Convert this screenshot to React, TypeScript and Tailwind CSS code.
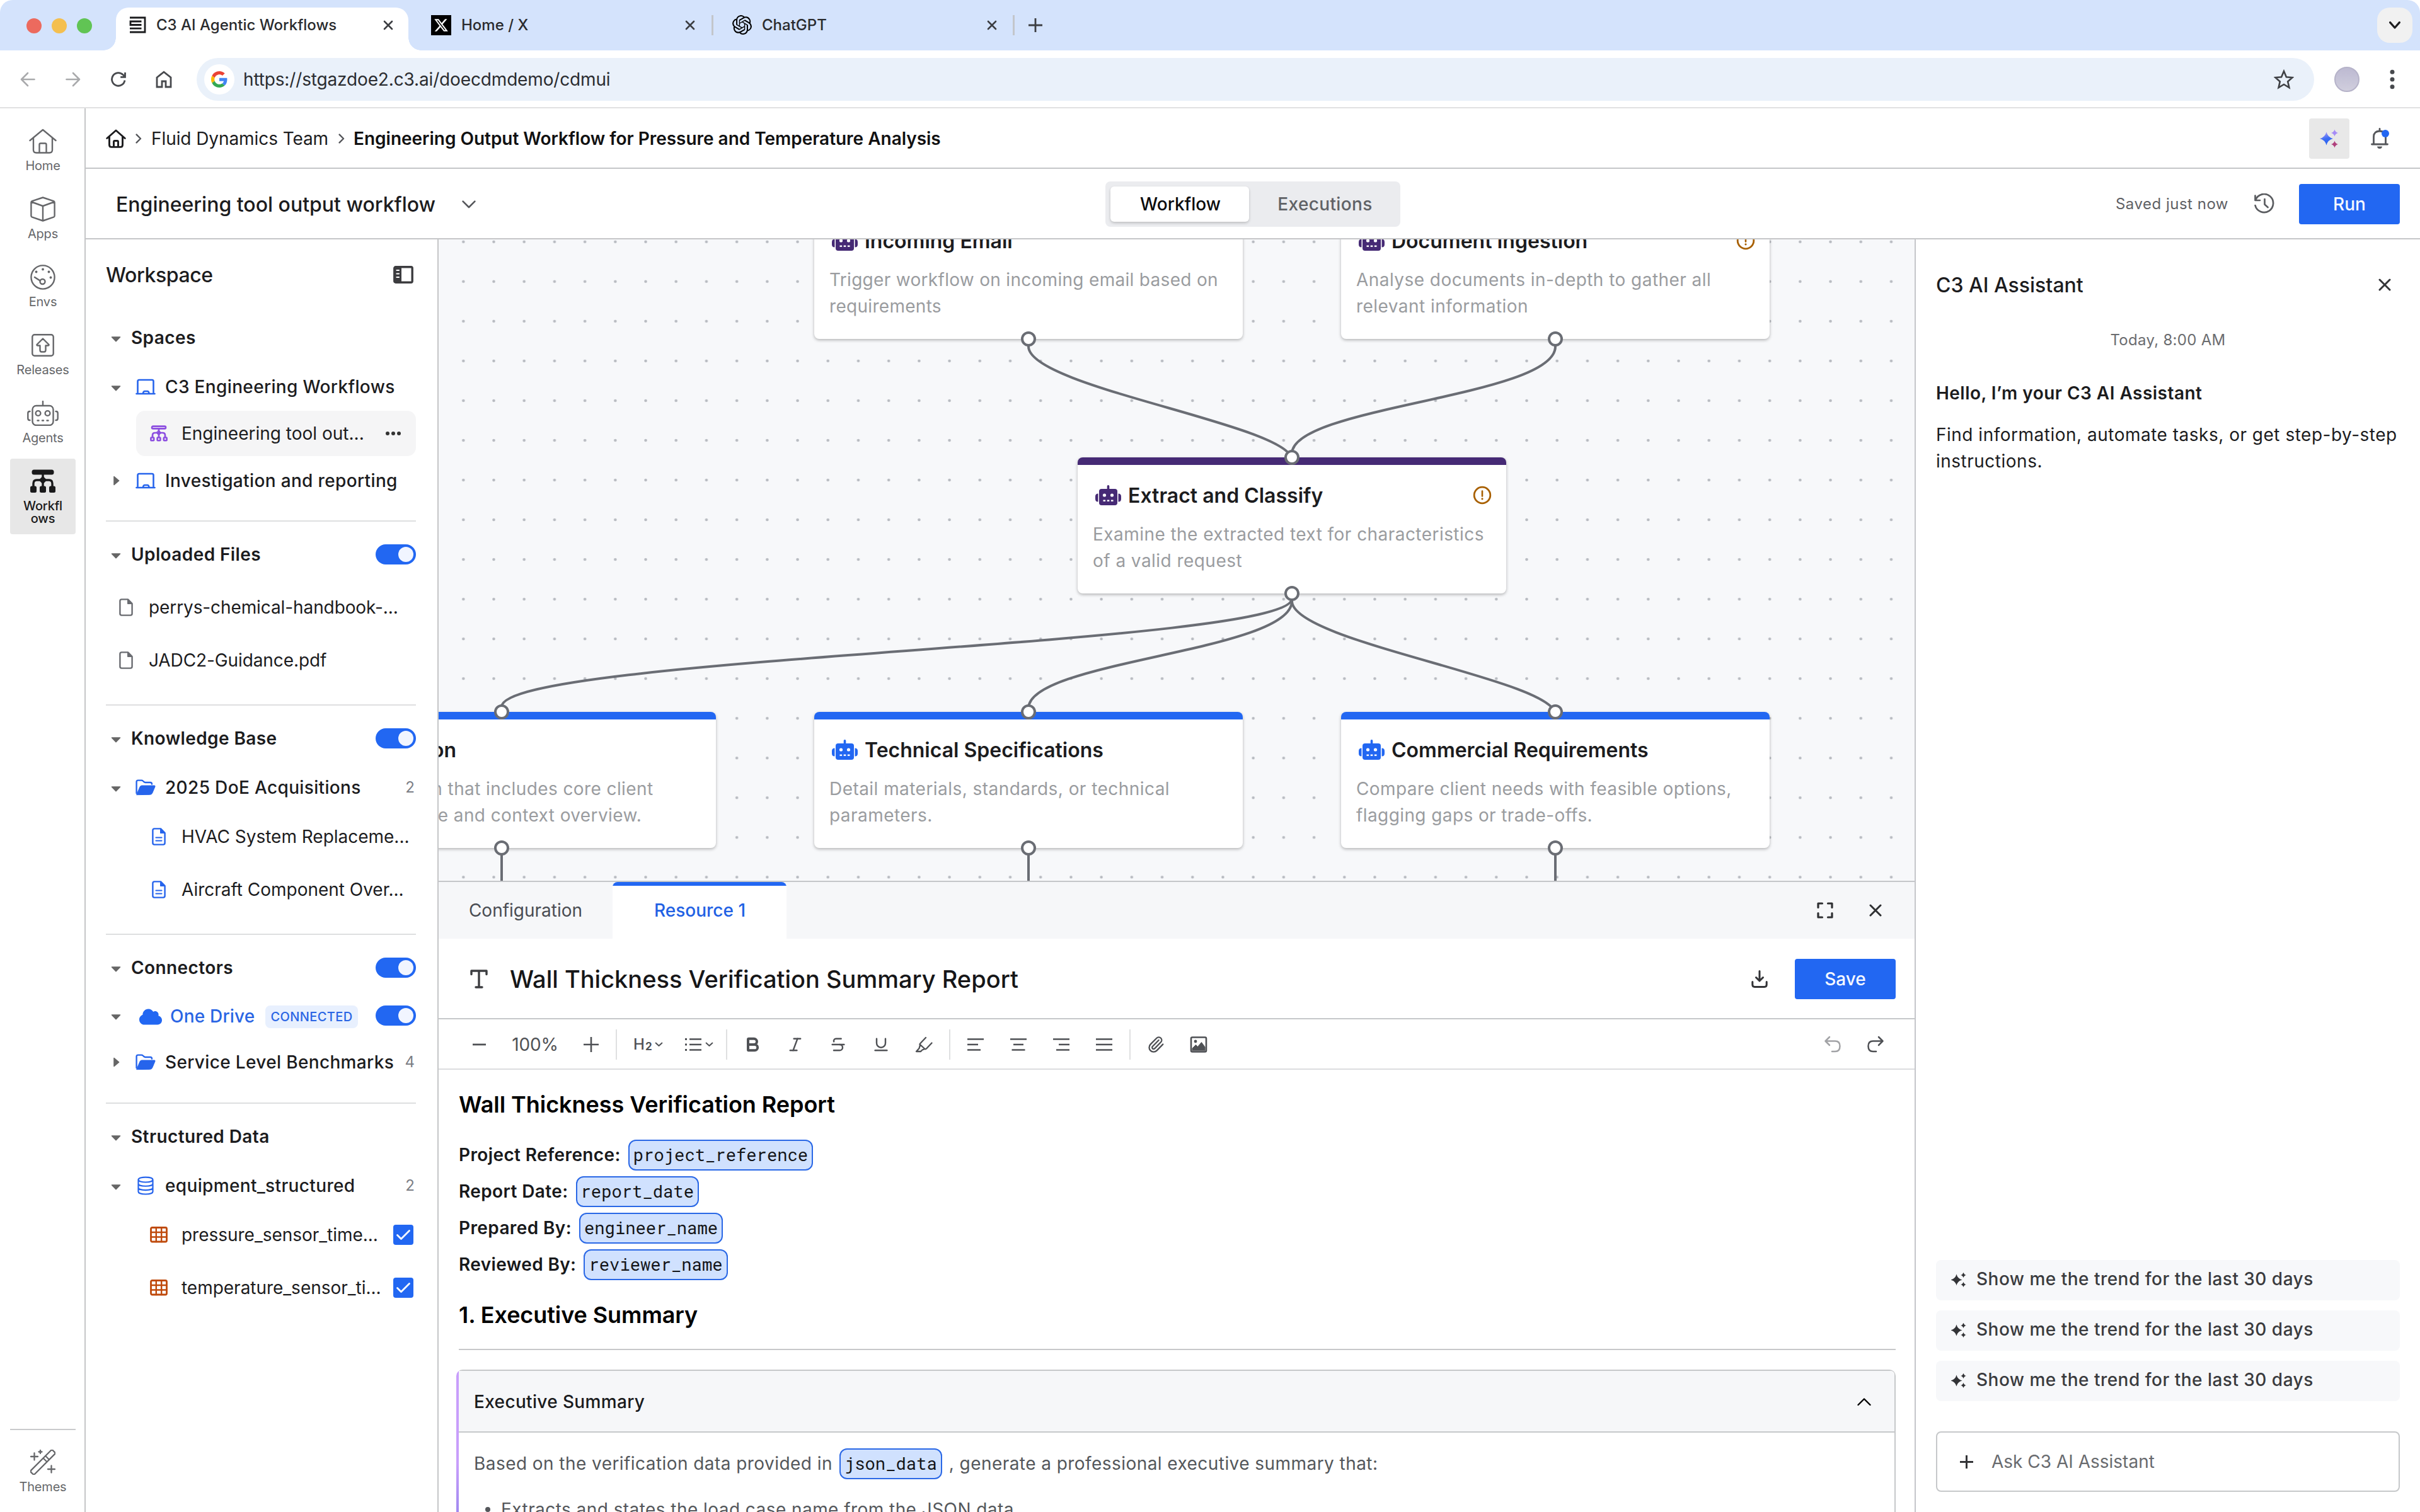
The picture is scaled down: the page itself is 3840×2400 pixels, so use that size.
import type { ReactNode } from "react";
import { FaCloud } from "react-icons/fa";
import { SiOpenai } from "react-icons/si";
import { Bold, Italic, Paperclip, Strikethrough, Underline } from "lucide-react";

/* ---------- icons ---------- */

type IconProps = { className?: string };

function Svg({ w, h, className = "", children }: { w: number; h: number; className?: string; children: ReactNode }) {
  return (
    <svg width={w} height={h} viewBox={`0 0 ${w} ${h}`} fill="none" stroke="currentColor" strokeLinecap="round" strokeLinejoin="round" className={`shrink-0 ${className}`}>
      {children}
    </svg>
  );
}

const star = (cx: number, cy: number, r: number) => {
  const k = r * 0.2;
  return `M${cx} ${cy - r}Q${cx + k} ${cy - k} ${cx + r} ${cy}Q${cx + k} ${cy + k} ${cx} ${cy + r}Q${cx - k} ${cy + k} ${cx - r} ${cy}Q${cx - k} ${cy - k} ${cx} ${cy - r}Z`;
};

const Close = ({ size = 18, sw = 3, className = "" }: { size?: number; sw?: number; className?: string }) => (
  <Svg w={size} h={size} className={className}>
    <path d={`M2 2L${size - 2} ${size - 2}M${size - 2} 2L2 ${size - 2}`} strokeWidth={sw} />
  </Svg>
);

const Plus = ({ size = 24, sw = 3, className = "" }: { size?: number; sw?: number; className?: string }) => (
  <Svg w={size} h={size} className={className}>
    <path d={`M${size / 2} 2V${size - 2}M2 ${size / 2}H${size - 2}`} strokeWidth={sw} strokeLinecap="butt" />
  </Svg>
);

const ChevDown = ({ w = 20, h = 12, sw = 2.6, className = "" }: { w?: number; h?: number; sw?: number; className?: string }) => (
  <Svg w={w} h={h} className={className}>
    <path d={`M1.6 1.6L${w / 2} ${h - 2}L${w - 1.6} 1.6`} strokeWidth={sw} />
  </Svg>
);

const ChevRight = ({ className = "" }: IconProps) => (
  <Svg w={10} h={16} className={className}>
    <path d="M1.6 1.6L8 8L1.6 14.4" strokeWidth={2.4} />
  </Svg>
);

const Caret = ({ open = true }: { open?: boolean }) => (
  <span className="flex w-8 shrink-0 items-center justify-center text-[#666]">
    {open ? (
      <Svg w={16} h={9} className="mt-1">
        <path d="M1.5 1H14.5L8 7.6Z" fill="currentColor" strokeWidth={1.6} />
      </Svg>
    ) : (
      <Svg w={10} h={16} className="ml-[2px]">
        <path d="M1 1.5V14.5L8.6 8Z" fill="currentColor" strokeWidth={1.6} />
      </Svg>
    )}
  </span>
);

const Google = () => (
  <svg width="26" height="26" viewBox="0 0 48 48">
    <path fill="#EA4335" d="M24 9.5c3.54 0 6.71 1.22 9.21 3.6l6.85-6.85C35.9 2.38 30.47 0 24 0 14.62 0 6.51 5.38 2.56 13.22l7.98 6.19C12.43 13.72 17.74 9.5 24 9.5z" />
    <path fill="#4285F4" d="M46.98 24.55c0-1.57-.15-3.09-.38-4.55H24v9.02h12.94c-.58 2.96-2.26 5.48-4.78 7.18l7.73 6c4.51-4.18 7.09-10.36 7.09-17.65z" />
    <path fill="#FBBC05" d="M10.53 28.59c-.48-1.45-.76-2.99-.76-4.59s.27-3.14.76-4.59l-7.98-6.19C.92 16.46 0 20.12 0 24c0 3.88.92 7.54 2.56 10.78l7.97-6.19z" />
    <path fill="#34A853" d="M24 48c6.48 0 11.93-2.13 15.89-5.81l-7.73-6c-2.15 1.45-4.92 2.3-8.16 2.3-6.26 0-11.57-4.22-13.47-9.91l-7.98 6.19C6.51 42.62 14.62 48 24 48z" />
  </svg>
);

const HomeRail = () => (
  <Svg w={44} h={40}>
    <path d="M1.5 19L22 2L42.5 19M7 15V34Q7 38.5 11.5 38.5H32.5Q37 38.5 37 34V15M16.500 38V25.500Q16.500 23.500 18.500 23.500H25.500Q27.500 23.500 27.500 25.500V38" strokeWidth={2.4} />
  </Svg>
);

const CubeIcon = () => (
  <Svg w={40} h={40}>
    <path d="M20 1.500L37 7.200Q38.600 7.800 38.600 9.400V30.500Q38.600 32 37 32.700L20 38.500L3 32.700Q1.400 32 1.400 30.500V9.400Q1.400 7.800 3 7.200ZM2 8.500L20 15L38 8.500M20 15V38" strokeWidth={2.4} />
  </Svg>
);

const GaugeIcon = () => (
  <Svg w={40} h={40}>
    <circle cx="20" cy="20" r="18.600" strokeWidth={2.4} />
    <circle cx="19.500" cy="27" r="4" strokeWidth={2.4} />
    <path d="M7 20L15.500 25.500" strokeWidth={2.6} />
    <g fill="currentColor" stroke="none">
      <circle cx="9.500" cy="11.500" r="1.900" />
      <circle cx="20" cy="7.500" r="1.900" />
      <circle cx="29.500" cy="11.500" r="1.900" />
      <circle cx="32.500" cy="20.500" r="1.900" />
    </g>
  </Svg>
);

const ReleaseIcon = () => (
  <Svg w={36} h={36}>
    <rect x="1.300" y="1.300" width="33.400" height="33.400" rx="3.500" strokeWidth={2.4} />
    <path d="M18 7.500L27.500 17Q28 18.500 26 18.500H22.500V25.500Q22.500 28.500 20 28.500H16Q13.500 28.500 13.500 25.500V18.500H10Q8 18.500 8.500 17Z" strokeWidth={2.4} />
  </Svg>
);

const AgentIcon = () => (
  <Svg w={50} h={40}>
    <rect x="8.500" y="8" width="33" height="31" rx="6" strokeWidth={2.4} />
    <path d="M25 1V7M4.500 17H4Q1.300 17 1.300 20V28Q1.300 31 4 31H4.500M45.500 17H46Q48.700 17 48.700 20V28Q48.700 31 46 31H45.500" strokeWidth={2.4} />
    <circle cx="17.500" cy="20" r="3.900" strokeWidth={2.4} />
    <circle cx="32.500" cy="20" r="3.900" strokeWidth={2.4} />
    <path d="M16.500 31.500H18.500M24 31.500H26M31.500 31.500H33.500" strokeWidth={2.4} />
  </Svg>
);

const WorkflowIcon = () => (
  <Svg w={40} h={40}>
    <g fill="currentColor" stroke="none">
      <rect x="2.500" y="1.500" width="35" height="8" rx="3.500" />
      <rect x="0" y="27.500" width="10" height="10.500" rx="2.500" />
      <rect x="15" y="27.500" width="10" height="10.500" rx="2.500" />
      <rect x="30" y="27.500" width="10" height="10.500" rx="2.500" />
      <path d="M20 11.500L26.500 18L20 24.500L13.500 18Z" />
    </g>
    <path d="M20 9V28M5 28V23.500Q5 18 10.500 18H29.500Q35 18 35 23.500V28" strokeWidth={3.4} />
  </Svg>
);

const WorkflowSmall = ({ className = "" }: IconProps) => (
  <Svg w={28} h={26} className={className}>
    <rect x="3" y="1.600" width="22" height="3.800" rx="1.900" strokeWidth={2.600} />
    <path d="M14 6V19M4 19V16Q4 12 8 12H20Q24 12 24 16V19" strokeWidth={2.700} />
    <path d="M14 8L18 12L14 16L10 12Z" fill="currentColor" strokeWidth={1} />
    <rect x="1.400" y="19.500" width="4.800" height="4.800" rx=".8" strokeWidth={2.600} />
    <rect x="11.600" y="19.500" width="4.800" height="4.800" rx=".8" strokeWidth={2.600} />
    <rect x="21.800" y="19.500" width="4.800" height="4.800" rx=".8" strokeWidth={2.600} />
  </Svg>
);

const WandIcon = () => (
  <Svg w={40} h={40}>
    <g transform="rotate(-45 20 20)">
      <rect x="-4.500" y="15.800" width="49" height="8.400" rx="2.500" strokeWidth={2.300} />
      <path d="M25 16V24M30 16V24" strokeWidth={2.100} />
    </g>
    <path d="M6.500 5.500V16.500M1 11H12M16 1V6M13.500 3.500H18.500M33.500 25.500V36.500M28 31H39" strokeWidth={2.300} />
  </Svg>
);

const LaptopIcon = () => (
  <Svg w={32} h={26}>
    <path d="M3.500 22V4.200Q3.500 2 5.700 2H26.300Q28.500 2 28.500 4.200V22M1.500 24H30.500M12 23.500Q12.500 20 14.500 20H19Q21 20 21.500 23.500" strokeWidth={2.600} />
  </Svg>
);

const FolderIcon = () => (
  <Svg w={32} h={26}>
    <path d="M1.600 22V4Q1.600 1.600 4 1.600H9.500Q10.800 1.600 11.700 2.500L13.500 4.200Q14.300 5 15.500 5H23.500Q26 5 26 7.500" strokeWidth={2.400} />
    <path d="M1.800 24.300L7 12Q7.800 10 10 10H30Q31.500 10 31 11.500L26.700 21.800Q25.700 24.300 23 24.300Z" fill="currentColor" strokeWidth={1} />
  </Svg>
);

const FileIcon = ({ lines = false, className = "" }: IconProps & { lines?: boolean }) => (
  <Svg w={22} h={28} className={className}>
    <path d="M14 1.400H4Q1.400 1.400 1.400 4V24Q1.400 26.600 4 26.600H18Q20.600 26.600 20.600 24V8Z" strokeWidth={2.400} />
    <path d="M13.500 2V8.500H20.500Z" fill="currentColor" strokeWidth={1} />
    {lines && <path d="M6.500 15.500H15.500M6.500 20.500H15.500" strokeWidth={2.200} />}
  </Svg>
);

const DbIcon = () => (
  <Svg w={26} h={30}>
    <path d="M1.500 5.500C1.500 .2 24.500 .2 24.500 5.500C24.500 10.800 1.500 10.800 1.500 5.500V24.500C1.500 29.800 24.500 29.800 24.500 24.500V5.500M1.500 12C1.500 17 24.500 17 24.500 12M1.500 18.300C1.500 23.300 24.500 23.300 24.500 18.300" strokeWidth={2.200} />
  </Svg>
);

const TableIcon = () => (
  <Svg w={28} h={26} className="text-[#bf4a0c]">
    <rect x="1.500" y="1.500" width="25" height="22.500" rx="2" strokeWidth={2.800} />
    <path d="M9.800 2V24M18.200 2V24M2 9H26M2 16.500H26" strokeWidth={2.400} />
  </Svg>
);

const PanelIcon = () => (
  <Svg w={32} h={28} className="text-[#3c3c3f]">
    <rect x="1.800" y="1.800" width="28.400" height="24.400" rx="2" strokeWidth={3.400} />
    <rect x="2" y="2" width="11" height="24" fill="currentColor" stroke="none" />
    <path d="M5.500 7H9M5.500 12.500H9M5.500 18H9" stroke="white" strokeWidth={2.200} />
  </Svg>
);

const RobotSolid = () => (
  <Svg w={41} h={32}>
    <g fill="currentColor" stroke="none">
      <rect x="6" y="6" width="29" height="26" rx="4" />
      <rect x="18.700" y="0" width="3.600" height="8" rx="1.800" />
      <path d="M4.500 13.500V26.500Q0 26.500 0 22V18Q0 13.500 4.500 13.500ZM36.500 13.500V26.500Q41 26.500 41 22V18Q41 13.500 36.500 13.500Z" />
    </g>
    <g fill="white" stroke="none">
      <circle cx="14.500" cy="16" r="2.600" />
      <circle cx="26.500" cy="16" r="2.600" />
      <rect x="12.500" y="23.500" width="3.600" height="2.400" />
      <rect x="18.700" y="23.500" width="3.600" height="2.400" />
      <rect x="24.900" y="23.500" width="3.600" height="2.400" />
    </g>
  </Svg>
);

const WarnIcon = () => (
  <Svg w={30} h={30} className="text-[#a86000]">
    <circle cx="15" cy="15" r="12.800" strokeWidth={2.800} />
    <path d="M15 8.500V16.500" strokeWidth={2.600} />
    <circle cx="15" cy="20.800" r="1.600" fill="currentColor" stroke="none" />
  </Svg>
);

const Sparkles = () => (
  <Svg w={24} h={24} className="mt-[3px] text-[#333437]">
    <g fill="currentColor" stroke="none">
      <path d={star(8.500, 11.500, 9)} />
      <path d={star(19.500, 4, 4.300)} />
      <path d={star(19.500, 19, 4.300)} />
    </g>
  </Svg>
);

const AiSparkles = () => (
  <Svg w={30} h={30}>
    <defs>
      <linearGradient id="ai-main" x1="0" y1="0" x2="0.3" y2="1">
        <stop offset="0" stopColor="#c3a3fb" />
        <stop offset=".6" stopColor="#3b6cf3" />
        <stop offset="1" stopColor="#2a62f0" />
      </linearGradient>
    </defs>
    <g stroke="none">
      <path d={star(10.500, 15, 10.500)} fill="url(#ai-main)" />
      <path d={star(23.500, 6, 5.500)} fill="#a68cf6" />
      <path d={star(23.500, 24, 5.500)} fill="#b0407c" />
    </g>
  </Svg>
);

/* ---------- browser chrome ---------- */

function BrowserTab({ icon, title, className = "" }: { icon: ReactNode; title: string; className?: string }) {
  return (
    <div className={`flex h-full items-center pb-px ${className}`}>
      {icon}
      <span className="flex-1 text-[24px] font-medium text-[#2a2b2e]">{title}</span>
      <Close size={16} sw={2.6} className="text-[#3c3e42]" />
    </div>
  );
}

function BrowserChrome() {
  return (
    <div className="flex flex-col">
      <div className="flex h-20 items-center rounded-t-[20px] bg-[#d4e3fc]">
        <div className="ml-[42px] flex gap-4 pt-px">
          <span className="size-6 rounded-full bg-[#ec6a5e]" />
          <span className="size-6 rounded-full bg-[#f4bf4f]" />
          <span className="size-6 rounded-full bg-[#61c454]" />
        </div>
        <div className="relative ml-[38px] mt-3 h-[68px] w-[464px] rounded-t-[20px] bg-white">
          <span className="absolute bottom-0 -left-5 size-5 bg-[radial-gradient(circle_at_0_0,transparent_19.500px,white_20px)]" />
          <span className="absolute -right-5 bottom-0 size-5 bg-[radial-gradient(circle_at_100%_0,transparent_19.500px,white_20px)]" />
          <BrowserTab
            className="-mt-[6px] pr-6 pl-[21px]"
            title="C3 AI Agentic Workflows"
            icon={
              <Svg w={27} h={27} className="mr-4 text-[#1b1c1e]">
                <path d="M1 2H25V25H1M19.500 8H2V13.500H19.500M1 19.200H19.500" strokeWidth={2.800} strokeLinecap="butt" strokeLinejoin="miter" />
              </Svg>
            }
          />
        </div>
        <BrowserTab
          className="ml-9 w-[419px]"
          title="Home / X"
          icon={
            <span className="mr-4 flex size-8 items-center justify-center bg-black">
              <svg width="24" height="24" viewBox="0 0 24 24" fill="white">
                <path d="M18.244 2.250h3.308l-7.227 8.260 8.502 11.240H16.170l-5.214-6.817L4.990 21.750H1.680l7.730-8.835L1.254 2.250H8.080l4.713 6.231zm-1.161 17.520h1.833L7.084 4.126H5.117z" />
              </svg>
            </span>
          }
        />
        <span className="ml-[26px] h-8 w-[3px] bg-[#c3c6cb]" />
        <BrowserTab className="ml-[30px] w-[420px]" title="ChatGPT" icon={<SiOpenai className="mr-4 size-[31px] text-black" />} />
        <span className="ml-[25px] h-8 w-[3px] bg-[#c3c6cb]" />
        <Plus size={26} sw={2.8} className="ml-[20px] text-[#3c3e42]" />
        <span className="mr-3 ml-auto flex size-14 items-center justify-center rounded-[20px] bg-[#f1f1f1]">
          <ChevDown w={18} h={12} sw={3.2} className="text-[#1d1d1f]" />
        </span>
      </div>
      <div className="h-[92px] border-b-2 border-[#e1e1e2] pt-3">
        <div className="flex h-[68px] items-center pl-2 text-[#47494d]">
          <span className="flex w-[72px] justify-center text-[#a9aaac]">
            <Svg w={24} h={24}><path d="M22.500 12H2M12 2L2 12L12 22" strokeWidth={2.600} /></Svg>
          </span>
          <span className="flex w-[72px] justify-center text-[#a9aaac]">
            <Svg w={24} h={24}><path d="M1.500 12H22M12 2L22 12L12 22" strokeWidth={2.600} /></Svg>
          </span>
          <span className="flex w-[72px] justify-center">
            <Svg w={26} h={26}><path d="M23 14.500A10.300 10.300 0 1 1 20.300 5.800L23.500 9M23.500 2V9.300H16.200" strokeWidth={2.800} strokeLinecap="butt" strokeLinejoin="miter" /></Svg>
          </span>
          <span className="flex w-[72px] justify-center">
            <Svg w={28} h={28}><path d="M3 11L14 2.200L25 11V26H17V17H11V26H3Z" strokeWidth={2.800} strokeLinejoin="miter" /></Svg>
          </span>
          <div className="ml-4 flex h-[68px] w-[3360px] items-center rounded-full bg-[#eaf1fa] pr-8 pl-3">
            <span className="flex size-12 items-center justify-center rounded-full bg-white"><Google /></span>
            <span className="ml-[14px] flex-1 text-[28px] tracking-[-0.15px] text-[#2b2d31]">https://stgazdoe2.c3.ai/doecdmdemo/cdmui</span>
            <Svg w={32} h={32} className="text-[#3f4145]">
              <path d="M16 3L19.900 12.200L29.500 13L22.200 19.400L24.400 29L16 23.900L7.600 29L9.800 19.400L2.500 13L12.100 12.200Z" strokeWidth={2.600} strokeLinejoin="miter" />
            </Svg>
          </div>
          <span className="ml-8 size-10 rounded-full border-2 border-[#b6b3c9] bg-linear-to-b from-[#bdbad2] to-[#d0cedd]" />
          <Svg w={8} h={32} className="ml-[48px] text-[#47494d]">
            <g fill="currentColor" stroke="none">
              <circle cx="4" cy="4.300" r="3.500" /><circle cx="4" cy="16" r="3.500" /><circle cx="4" cy="27.700" r="3.500" />
            </g>
          </Svg>
        </div>
      </div>
    </div>
  );
}

/* ---------- navigation rail ---------- */

function RailItem({ icon, children, active = false }: { icon: ReactNode; children: ReactNode; active?: boolean }) {
  return (
    <div className={`flex flex-col items-center rounded-[4px] pt-4 pb-[15px] ${active ? "bg-[#e7e7e7] font-medium text-[#1a1a1b]" : "text-[#66676a]"}`}>
      <span className="flex h-10 items-center justify-center">{icon}</span>
      <span className="mt-[9px] text-center text-[20px] leading-5 tracking-[-0.2px]">{children}</span>
    </div>
  );
}

function Rail() {
  return (
    <nav className="flex w-[136px] shrink-0 flex-col gap-2 border-r-2 border-[#c5c6c8] pt-4 pr-[14px] pb-[15px] pl-4">
      <RailItem icon={<HomeRail />}>Home</RailItem>
      <RailItem icon={<CubeIcon />}>Apps</RailItem>
      <RailItem icon={<GaugeIcon />}>Envs</RailItem>
      <RailItem icon={<ReleaseIcon />}>Releases</RailItem>
      <RailItem icon={<AgentIcon />}>Agents</RailItem>
      <RailItem icon={<WorkflowIcon />} active>
        Workfl<br />ows
      </RailItem>
      <div className="mt-auto border-t-2 border-[#c9cacc] pt-[15px]">
        <RailItem icon={<WandIcon />}>Themes</RailItem>
      </div>
    </nav>
  );
}

/* ---------- workspace sidebar ---------- */

const Toggle = () => (
  <span className="flex h-8 w-16 shrink-0 items-center justify-end rounded-full bg-[#2267f2] p-1">
    <span className="size-6 rounded-full bg-[#f1f5ff]" />
  </span>
);

const Divider = ({ className }: { className: string }) => <div className={`h-[2px] shrink-0 bg-[#dedfe0] ${className}`} />;

function SectionTitle({ title, toggle = false, className }: { title: string; toggle?: boolean; className: string }) {
  return (
    <div className={`flex h-10 shrink-0 items-center ${className}`}>
      <Caret />
      <span className="ml-2 flex-1 font-semibold tracking-[0.400px]">{title}</span>
      {toggle && <Toggle />}
    </div>
  );
}

function Branch({ icon, title, count, open = true, className }: { icon: ReactNode; title: string; count?: number; open?: boolean; className: string }) {
  return (
    <div className={`flex h-10 shrink-0 items-center ${className}`}>
      <Caret open={open} />
      <span className="ml-[15px] flex w-8 justify-center text-[#2664ec]">{icon}</span>
      <span className="ml-[15px] flex-1 font-medium whitespace-nowrap tracking-[0.350px]">{title}</span>
      {count !== undefined && <span className="pr-[2px] text-[24px] text-[#7b7e85]">{count}</span>}
    </div>
  );
}

function Leaf({ icon, title, checked = false, className }: { icon: ReactNode; title: string; checked?: boolean; className: string }) {
  return (
    <div className={`flex h-10 shrink-0 items-center pl-[70px] ${className}`}>
      <span className="flex w-7 justify-center text-[#2664ec]">{icon}</span>
      <span className="ml-[22px] flex-1 whitespace-nowrap tracking-[-0.020px]">{title}</span>
      {checked && (
        <span className="mr-1 flex size-8 items-center justify-center rounded-[4px] bg-[#2267f2]">
          <Svg w={24} h={18} className="text-white"><path d="M2.500 9.500L8.500 15.500L21.500 2.500" strokeWidth={2.800} /></Svg>
        </span>
      )}
    </div>
  );
}

function UploadedFile({ title, className }: { title: string; className: string }) {
  return (
    <div className={`flex h-10 shrink-0 items-center pl-[21px] ${className}`}>
      <FileIcon className="text-[#6a6c71]" />
      <span className="ml-[25px] whitespace-nowrap tracking-[-0.100px]">{title}</span>
    </div>
  );
}

function Sidebar() {
  return (
    <aside className="flex w-[560px] shrink-0 flex-col border-r-2 border-[#c5c6c8] pt-9 pr-[34px] pl-8 text-[28px] text-[#1c1c1e]">
      <div className="flex h-10 items-center justify-between pr-1">
        <span className="pt-px text-[32px] font-medium tracking-[-0.400px]">Workspace</span>
        <PanelIcon />
      </div>
      <SectionTitle title="Spaces" className="mt-[60px]" />
      <Branch icon={<LaptopIcon />} title="C3 Engineering Workflows" className="mt-[38px]" />
      <div className="mt-[18px] ml-12 flex h-[72px] shrink-0 items-center rounded-[14px] bg-[#f5f5f6] pr-6 pl-[22px]">
        <WorkflowSmall className="text-[#8d4fe0]" />
        <span className="ml-[22px] flex-1 whitespace-nowrap">Engineering tool out...</span>
        <Svg w={24} h={6} className="text-[#333]">
          <g fill="currentColor" stroke="none"><circle cx="3" cy="3" r="3" /><circle cx="12" cy="3" r="3" /><circle cx="21" cy="3" r="3" /></g>
        </Svg>
      </div>
      <Branch icon={<LaptopIcon />} title="Investigation and reporting" open={false} className="mt-[19px]" />
      <Divider className="mt-[43px]" />
      <SectionTitle title="Uploaded Files" toggle className="mt-8" />
      <UploadedFile title="perrys-chemical-handbook-..." className="mt-11" />
      <UploadedFile title="JADC2-Guidance.pdf" className="mt-11" />
      <Divider className="mt-[50px]" />
      <SectionTitle title="Knowledge Base" toggle className="mt-8" />
      <Branch icon={<FolderIcon />} title="2025 DoE Acquisitions" count={2} className="mt-[38px]" />
      <Leaf icon={<FileIcon lines />} title="HVAC System Replaceme..." className="mt-[38px]" />
      <Leaf icon={<FileIcon lines />} title="Aircraft Component Over..." className="mt-11" />
      <Divider className="mt-[50px]" />
      <SectionTitle title="Connectors" toggle className="mt-8" />
      <div className="mt-9 flex h-10 shrink-0 items-center text-[#2a65e4]">
        <Caret />
        <FaCloud className="mt-[3px] ml-[21px] size-9 text-[#2267f2]" />
        <span className="mt-[2px] ml-[13px] font-medium tracking-[0.200px]">One Drive</span>
        <span className="mt-[3px] ml-[17px] flex h-9 items-center rounded-[8px] bg-[#e8f0fe] px-2 text-[20px] font-medium tracking-[0.400px]">CONNECTED</span>
        <span className="ml-auto"><Toggle /></span>
      </div>
      <Branch icon={<FolderIcon />} title="Service Level Benchmarks" count={4} open={false} className="mt-[34px]" />
      <Divider className="mt-11" />
      <SectionTitle title="Structured Data" className="mt-8" />
      <Branch icon={<DbIcon />} title="equipment_structured" count={2} className="mt-[38px]" />
      <Leaf icon={<TableIcon />} title="pressure_sensor_time..." checked className="mt-[38px]" />
      <Leaf icon={<TableIcon />} title="temperature_sensor_ti..." checked className="mt-11" />
    </aside>
  );
}

/* ---------- workflow canvas ---------- */

function Handle({ className }: { className: string }) {
  return <span className={`absolute left-[328px] size-6 rounded-full border-4 border-[#6a6d74] bg-white ${className}`} />;
}

type NodeProps = {
  title: string;
  lines: string[];
  tone: "purple" | "blue";
  warn?: boolean;
  top?: boolean;
  tracking?: string;
  className: string;
};

function Node({ title, lines, tone, warn = false, top = true, tracking = "tracking-[0.450px]", className }: NodeProps) {
  const purple = tone === "purple";
  return (
    <div className={`absolute h-[216px] w-[680px] rounded-[8px] bg-white shadow-[0_2px_5px_rgba(0,0,0,0.28)] ${className}`}>
      <div className={`h-3 rounded-t-[8px] ${purple ? "bg-[#462a75]" : "bg-[#2267f2]"}`} />
      <div className={`mt-7 flex h-10 items-center pr-[23px] pl-7 ${purple ? "text-[#462a75]" : "text-[#2267f2]"}`}>
        <RobotSolid />
        <span className="ml-[11px] flex-1 pt-[2px] text-[32px] font-semibold whitespace-nowrap text-[#1c1c1e]">{title}</span>
        {warn && <WarnIcon />}
      </div>
      <div className={`mt-[21px] pl-6 text-[28px] leading-[42px] whitespace-nowrap text-[#9a9c9f] ${tracking}`}>
        {lines.map((l) => <div key={l}>{l}</div>)}
      </div>
      {top && <Handle className="-top-3" />}
      <Handle className="-bottom-3" />
    </div>
  );
}

function Canvas() {
  return (
    <div className="relative h-[1018px] shrink-0 overflow-hidden bg-[#f7f8fa]">
      <svg className="absolute inset-0" width="2342" height="1018" viewBox="696 380 2342 1018" fill="none">
        <defs>
          <pattern id="dots" x="711.200" y="352.300" width="48.206" height="63.030" patternUnits="userSpaceOnUse">
            <circle cx="24.100" cy="31.500" r="2.300" fill="#b8bbc1" />
          </pattern>
        </defs>
        <rect x="696" y="380" width="2342" height="1018" fill="url(#dots)" />
        <g stroke="#6a6d74" strokeWidth="4">
          <path d="M1632 545V550C1632 615 2050 675 2050 730" />
          <path d="M2468 545V550C2468 630 2050 645 2050 720" />
          <path d="M2050 950C2050 1025 796 1042 796 1122" />
          <path d="M2050 949V954C2050 1034 1632 1049 1632 1124" />
          <path d="M2050 949V954C2050 1019 2468 1079 2468 1134" />
          <path d="M796 1350V1400M1632 1350V1400M2468 1350V1400" />
        </g>
      </svg>
      <Node title="Incoming Email" lines={["Trigger workflow on incoming email based on", "requirements"]} tone="purple" top={false} tracking="tracking-[0.300px]" className="top-[-58px] left-[596px]" />
      <Node title="Document Ingestion" lines={["Analyse documents in-depth to gather all", "relevant information"]} tone="purple" warn top={false} className="top-[-58px] left-[1432px]" />
      <Node title="Extract and Classify" lines={["Examine the extracted text for characteristics", "of a valid request"]} tone="purple" warn className="top-[346px] left-[1014px]" />
      <Node title="Introduction" lines={["Create a section that includes core client", "profiles, purpose and context overview."]} tone="blue" tracking="tracking-[0.400px]" className="top-[750px] left-[-240px]" />
      <Node title="Technical Specifications" lines={["Detail materials, standards, or technical", "parameters."]} tone="blue" className="top-[750px] left-[596px]" />
      <Node title="Commercial Requirements" lines={["Compare client needs with feasible options,", "flagging gaps or trade-offs."]} tone="blue" tracking="tracking-[0.400px]" className="top-[750px] left-[1432px]" />
    </div>
  );
}

/* ---------- resource editor ---------- */

const Bar = ({ className }: { className: string }) => <span className={`h-12 w-[2px] bg-[#dfe0e1] ${className}`} />;

const Lines = ({ d }: { d: string }) => (
  <Svg w={28} h={22}><path d={d} strokeWidth={2.600} strokeLinecap="butt" /></Svg>
);

function Toolbar() {
  return (
    <div className="flex h-20 shrink-0 items-center border-b-2 border-[#dcdddf] pt-[2px] pr-12 pl-[50px] text-[#4f5155]">
      <Svg w={28} h={28}><path d="M4 14H25" strokeWidth={2.800} strokeLinecap="butt" /></Svg>
      <span className="ml-[29px] w-[92px] text-center text-[28px] tracking-[-0.200px]">100%</span>
      <Plus size={28} sw={2.6} className="ml-[29px]" />
      <Bar className="ml-[25px]" />
      <span className="ml-[26px] flex w-[47px] items-center">
        <span className="text-[24px] leading-6 font-medium">H</span>
        <span className="mt-[5px] mr-auto ml-px text-[17px] leading-6 font-bold">2</span>
        <ChevDown w={13} h={8} sw={2} />
      </span>
      <span className="ml-[34px] flex w-[46px] items-center justify-between">
        <Svg w={28} h={22}>
          <path d="M8 2.500H27M8 11H27M8 19.500H27" strokeWidth={2.600} strokeLinecap="butt" />
          <path d="M1 2.500H4M1 11H4M1 19.500H4" strokeWidth={2.800} strokeLinecap="butt" />
        </Svg>
        <ChevDown w={13} h={8} sw={2} />
      </span>
      <Bar className="ml-5" />
      <div className="ml-[26px] flex items-center gap-10">
        <Bold size={28} strokeWidth={3.4} />
        <Italic size={28} strokeWidth={2.1} />
        <Strikethrough size={28} strokeWidth={2.1} />
        <Underline size={28} strokeWidth={2.1} />
        <Svg w={28} h={28}>
          <path d="M17 3L8 12.500Q7 13.500 8 14.800L6.500 20L2 25H9L11.500 22.500L15.500 21Q16.800 21.600 18 20.500L26.500 11.500M8.500 14.500L15.500 21" strokeWidth={2.300} />
        </Svg>
      </div>
      <Bar className="ml-[26px]" />
      <div className="ml-[26px] flex items-center gap-10">
        <Lines d="M1 2.500H27M1 11H18M1 19.500H22" />
        <Lines d="M1 2.500H27M6 11H22M3.500 19.500H24.500" />
        <Lines d="M1 2.500H27M10 11H27M6 19.500H27" />
        <Lines d="M1 2.500H27M1 11H27M1 19.500H27" />
      </div>
      <Bar className="ml-[26px]" />
      <div className="ml-[26px] flex flex-1 items-center gap-10">
        <Paperclip size={28} strokeWidth={2} />
        <Svg w={28} h={28}>
          <rect x="2" y="2.500" width="24" height="23" rx="2" strokeWidth={2.600} />
          <circle cx="9" cy="9" r="2.400" fill="currentColor" stroke="none" />
          <path d="M4 23.500V20L9.500 14.500L12.500 17.500L18.500 10.500L24 18V23.500Z" fill="currentColor" strokeWidth={1} />
        </Svg>
      </div>
      <div className="flex items-center gap-10">
        <Svg w={28} h={28} className="text-[#a2a3a6]">
          <path d="M9 2L2.500 8.500L9 15M3 8.500H18Q25.500 8.500 25.500 16.500Q25.500 25 18 25H13" strokeWidth={2.500} />
        </Svg>
        <Svg w={28} h={28}>
          <path d="M19 2L25.500 8.500L19 15M25 8.500H10Q2.500 8.500 2.500 16.500Q2.500 25 10 25H15" strokeWidth={2.500} />
        </Svg>
      </div>
    </div>
  );
}

const Chip = ({ children, className = "" }: { children: ReactNode; className?: string }) => (
  <span className={`inline-flex h-[49px] items-center rounded-[12px] border-2 border-[#2a68e6] bg-[#d0e1fe] px-[6px] font-['Roboto_Mono','DejaVu_Sans_Mono',monospace] text-[27.200px] leading-none text-[#141518] ${className}`}>
    {children}
  </span>
);

const FIELDS: [string, string][] = [
  ["Project Reference:", "project_reference"],
  ["Report Date:", "report_date"],
  ["Prepared By:", "engineer_name"],
  ["Reviewed By:", "reviewer_name"],
];

function Editor() {
  return (
    <section className="flex min-h-0 flex-1 flex-col border-t-2 border-[#c4c6c9]">
      <div className="flex h-[90px] shrink-0 items-stretch bg-[#f6f7f9] text-[28px]">
        <div className="flex w-[276px] items-center justify-center text-[#4a4d53]">Configuration</div>
        <div className="relative flex w-[276px] items-center justify-center overflow-hidden rounded-t-[8px] bg-white pl-px font-medium text-[#2261e4]">
          <span className="absolute inset-x-0 top-0 h-[6px] bg-[#2267f2]" />
          Resource 1
        </div>
        <div className="ml-auto flex items-center pr-[52px] text-[#2f3033]">
          <Svg w={26} h={26}>
            <path d="M2 8.500V2H8.500M17.500 2H24V8.500M24 17.500V24H17.500M8.500 24H2V17.500" strokeWidth={3.200} />
          </Svg>
          <Close size={20} sw={3} className="ml-[57px]" />
        </div>
      </div>
      <div className="flex h-32 shrink-0 items-center border-b-2 border-[#c6c8ca] pt-[2px] pr-[30px] pl-[50px]">
        <Svg w={28} h={30} className="text-[#3c3d40]">
          <path d="M2 7.500V2H26V7.500M14 2V28M9 28H19" strokeWidth={3.400} />
        </Svg>
        <span className="ml-[35px] flex-1 text-[38px] font-medium text-[#161618]">Wall Thickness Verification Summary Report</span>
        <Svg w={26} h={28} className="text-[#333437]">
          <path d="M13 1.500V17M7.500 11.500L13 17L18.500 11.500M1.800 18.500V23Q1.800 26.400 5.200 26.400H20.800Q24.200 26.400 24.200 23V18.500" strokeWidth={3} />
        </Svg>
        <button className="ml-[43px] h-16 w-40 rounded-[4px] bg-[#2267f2] text-[28px] font-medium text-[#f4f7ff]">Save</button>
      </div>
      <Toolbar />
      <div className="flex min-h-0 flex-1 flex-col overflow-hidden pt-[31px] pr-[30px] pl-8">
        <h1 className="h-12 shrink-0 text-[36px] leading-[48px] font-semibold tracking-[-0.050px] text-black">Wall Thickness Verification Report</h1>
        <div className="mt-[27px] flex shrink-0 flex-col text-[28px] font-semibold tracking-[0.380px] text-[#18191b]">
          {FIELDS.map(([label, value]) => (
            <div key={label} className="flex h-[58px] items-center">
              {label}
              <Chip className="ml-[12px] font-normal tracking-normal">{value}</Chip>
            </div>
          ))}
        </div>
        <h2 className="mt-[27px] h-12 shrink-0 text-[36px] leading-[48px] font-semibold tracking-[-0.080px] text-black">1. Executive Summary</h2>
        <div className="mt-[30px] h-[2px] shrink-0 bg-[#c7c8ca]" />
        <div className="mt-[31px] -ml-1 flex h-[300px] shrink-0 overflow-hidden rounded-t-[10px]">
          <span className="w-1 bg-linear-to-b from-[#c89efb] from-50% to-[#7c74e4]" />
          <div className="flex-1 overflow-hidden rounded-tr-[8px] border-t-2 border-r-2 border-[#c6c8ca] text-[28px]">
            <div className="flex h-[98px] items-center justify-between border-b-2 border-[#c6c8ca] bg-[#f6f7f9] pt-px pr-[37px] pl-6 font-medium tracking-[0.350px] text-[#1a1b1d]">
              Executive Summary
              <Svg w={22} h={14} className="text-black"><path d="M1.500 12L11 2.500L20.500 12" strokeWidth={2.400} /></Svg>
            </div>
            <div className="mt-5 flex h-[58px] items-center pl-6 tracking-[0.440px] text-[#54575b]">
              Based on the verification data provided in
              <Chip className="mx-[11px] tracking-normal">json_data</Chip>, generate a professional executive summary that:
            </div>
            <div className="mt-[23px] flex h-[42px] items-center pl-[42px] tracking-[0.440px] text-[#54575b]">
              <span className="mr-[17px] size-2 rounded-full bg-[#54575b]" />
              Extracts and states the load case name from the JSON data.
            </div>
          </div>
        </div>
      </div>
    </section>
  );
}

/* ---------- assistant ---------- */

function Assistant() {
  return (
    <aside className="flex w-[802px] shrink-0 flex-col border-l-2 border-[#c5c6ca] px-8 pt-[52px] pb-8 text-[28px] text-[#1c1c1e]">
      <div className="flex h-10 items-center justify-between pr-[14px]">
        <span className="pt-[2px] text-[32px] font-medium">C3 AI Assistant</span>
        <Close size={20} sw={3} className="text-[#333437]" />
      </div>
      <div className="mt-12 h-10 text-center text-[24px] leading-10 tracking-[0.300px] text-[#6b6c6f]">Today, 8:00 AM</div>
      <div className="mt-11 h-10 leading-10 font-semibold tracking-[0.470px]">Hello, I’m your C3 AI Assistant</div>
      <p className="mt-[25px] leading-[42px] tracking-[0.500px]">
        Find information, automate tasks, or get step-by-step<br />instructions.
      </p>
      <div className="mt-auto flex flex-col gap-4">
        {[0, 1, 2].map((i) => (
          <div key={i} className="flex h-16 items-center rounded-[8px] bg-[#f7f8fa] pb-1 pl-6 font-medium tracking-[0.480px] text-[#3a3b3e]">
            <Sparkles />
            <span className="ml-4">Show me the trend for the last 30 days</span>
          </div>
        ))}
      </div>
      <div className="mt-12 flex h-24 items-center rounded-[8px] border-2 border-[#c6c8ca] pl-[34px] text-[#696b6f]">
        <Plus size={25} sw={3} className="text-[#333437]" />
        <span className="ml-[27px]">Ask C3 AI Assistant</span>
      </div>
    </aside>
  );
}

/* ---------- page ---------- */

export default function App() {
  return (
    <div className="flex h-[2400px] w-[3840px] flex-col overflow-hidden bg-white font-['Inter','Liberation_Sans',sans-serif]">
      <BrowserChrome />
      <div className="flex min-h-0 flex-1">
        <Rail />
        <div className="flex min-w-0 flex-1 flex-col">
          <header className="flex h-24 shrink-0 items-center border-b-2 border-[#c5c6c8] pt-[2px] pr-8 pl-8 text-[28px] text-[#1c1c1e]">
            <Svg w={32} h={30}>
              <path d="M1.800 14.500L16 2L30.200 14.500M5.500 12V25Q5.500 28.400 9 28.400H23Q26.500 28.400 26.500 25V12M12.500 28V20Q12.500 18.500 14 18.500H18Q19.500 18.500 19.500 20V28" strokeWidth={2.900} />
            </Svg>
            <ChevRight className="ml-[15px] text-[#55575b]" />
            <span className="ml-[15px] tracking-[-0.080px]">Fluid Dynamics Team</span>
            <ChevRight className="ml-4 text-[#55575b]" />
            <span className="ml-[14px] flex-1 font-semibold tracking-[-0.020px] text-[#111112]">Engineering Output Workflow for Pressure and Temperature Analysis</span>
            <span className="flex size-16 items-center justify-center rounded-[4px] bg-[#e8e8e8]"><AiSparkles /></span>
            <span className="relative mr-4 ml-8 flex text-[#55575b]">
              <Svg w={32} h={34}>
                <path d="M3.500 26H28.500M6.500 25V14Q6.500 5.500 16 5Q25.500 5.500 25.500 14V25M16 1.500V5" strokeWidth={2.800} />
                <path d="M12 29.500H20Q19.500 33 16 33Q12.500 33 12 29.500Z" fill="currentColor" stroke="none" />
              </Svg>
              <span className="absolute top-[3px] right-[1px] size-3 rounded-full bg-[#2267f2]" />
            </span>
          </header>
          <div className="grid h-28 shrink-0 grid-cols-[1fr_auto_1fr] items-center border-b-2 border-[#c5c6c8] pt-[2px] text-[28px]">
            <div className="flex items-center pt-px pl-12 text-[32px] font-medium text-[#1c1c1e]">
              Engineering tool output workflow
              <ChevDown w={22} h={13} className="ml-[42px] text-[#55575b]" />
            </div>
            <div className="flex h-[72px] gap-2 rounded-[8px] bg-[#ebecef] p-2 font-medium">
              <span className="flex w-[220px] items-center justify-center rounded-[6px] bg-white pl-[2px] text-[#0c0c0d] shadow-[0_2px_4px_rgba(0,0,0,0.2)]">Workflow</span>
              <span className="flex w-56 items-center justify-center pl-px tracking-[0.350px] text-[#606266]">Executions</span>
            </div>
            <div className="flex items-center justify-end pr-8">
              <span className="text-[24px] tracking-[0.500px] text-[#5f6165]">Saved just now</span>
              <Svg w={34} h={34} className="ml-10 text-[#5a5c60]">
                <path d="M3 10.500A14.500 14.500 0 1 1 2.500 19M2.500 3.500V11H10M17.500 9V17.500L22.500 22" strokeWidth={2.700} />
              </Svg>
              <button className="ml-[38px] h-16 w-40 rounded-[4px] bg-[#2267f2] font-medium text-[#f4f7ff]">Run</button>
            </div>
          </div>
          <div className="flex min-h-0 flex-1">
            <Sidebar />
            <main className="flex min-w-0 flex-1 flex-col">
              <Canvas />
              <Editor />
            </main>
            <Assistant />
          </div>
        </div>
      </div>
    </div>
  );
}
